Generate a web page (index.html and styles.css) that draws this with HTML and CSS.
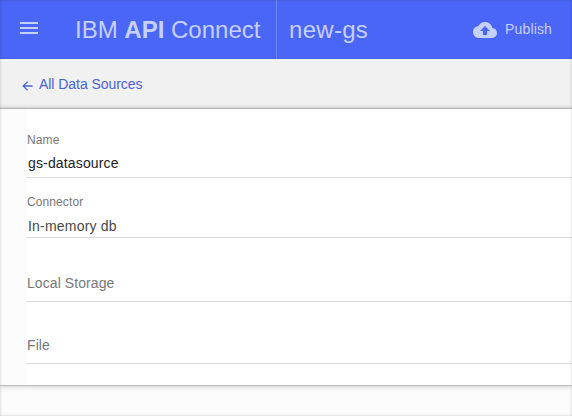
FILE: index.html
```html
<!DOCTYPE html>
<html lang="en">
<head>
<meta charset="utf-8">
<title>IBM API Connect</title>
<link rel="stylesheet" href="styles.css">
</head>
<body>
<div class="app">
  <header class="header">
    <svg class="menu" width="18" height="12" viewBox="0 0 18 12"><path d="M0 0h18v2H0zM0 5h18v2H0zM0 10h18v2H0z"/></svg>
    <div class="brand">IBM <b>API</b> Connect</div>
    <div class="project">new-gs</div>
    <div class="publish">
      <svg class="cloud" width="24" height="16" viewBox="0 4 24 16"><path d="M19.35 10.04C18.67 6.59 15.64 4 12 4 9.11 4 6.6 5.64 5.35 8.04 2.34 8.36 0 10.91 0 14c0 3.31 2.69 6 6 6h13c2.76 0 5-2.24 5-5 0-2.64-2.05-4.78-4.65-4.96zM14 13v4h-4v-4H7l5-5 5 5h-3z"/></svg>
      <span>Publish</span>
    </div>
  </header>
  <nav class="crumbs">
    <svg class="arrow" width="11" height="10" viewBox="0 0 11 10"><path d="M10.5 5H1.2M5.6.6L1.2 5l4.4 4.4"/></svg>
    <a class="back">All Data Sources</a>
  </nav>
  <main class="panel">
    <section class="field name"><div class="label">Name</div><div class="value">gs-datasource</div></section>
    <section class="field connector"><div class="label">Connector</div><div class="value">In-memory db</div></section>
    <section class="field empty storage">Local Storage</section>
    <section class="field empty file">File</section>
  </main>
</div>
</body>
</html>
```

FILE: styles.css
```css
* { box-sizing: border-box; }
body { margin: 0; font-family: "Liberation Sans", Arial, sans-serif; }
.app { position: relative; height: 416px; overflow: hidden; background: #fcfcfc; }
.app::after {
  content: ""; position: absolute; inset: 0; pointer-events: none;
  box-shadow: inset 0 0 3px rgba(0,0,0,.22);
}
.header {
  display: flex; height: 59px; padding-left: 20px;
  background: #4a66f7; border-bottom: 1px solid #4660dc; color: #c6d0fd;
}
.menu { margin-top: 22px; fill: #c6d0fd; }
.brand, .project { font-size: 24px; line-height: 60px; white-space: pre; }
.brand { width: 239px; padding-left: 37px; border-right: 1px solid #6f86f9; height: 59px; }
.project { padding-left: 12px; letter-spacing: .3px; }
.publish { display: flex; margin-left: auto; padding-right: 20px; font-size: 14px; line-height: 59px; letter-spacing: .15px; }
.cloud { margin: 22px 8px 0 0; fill: #c6d0fd; }
.crumbs {
  display: flex; height: 50px; padding-left: 22px;
  background: linear-gradient(#f1f1f1 45px, #e8e8e8 47px, #d8d8d8 49px, #bcbcbc 49px);
  color: #4a62d8; font-size: 14px; line-height: 51px;
}
.back { letter-spacing: -.05px; }
.arrow { margin: 22px 6px 0 0; fill: none; stroke: #4a62d8; stroke-width: 1.3; }
.panel {
  height: 276px; padding-left: 26px; background: linear-gradient(90deg, #fcfcfc 26px, #fff 26px);
  box-shadow: 0 1px 1px rgba(0,0,0,.14), 0 2px 5px rgba(0,0,0,.16);
}
.field { border-bottom: 1px solid #dcdcdc; }
.label { padding-left: 1px; color: #777; font-size: 12px; line-height: 14px; letter-spacing: .1px; }
.value { padding-left: 2px; color: #484848; font-size: 14px; line-height: 18px; letter-spacing: .15px; }
.name { height: 69px; padding-top: 24px; }
.name .value { margin-top: 7px; color: #222; }
.connector { height: 60px; padding-top: 17px; }
.connector .value { margin-top: 8px; letter-spacing: .2px; }
.empty { padding-left: 1px; color: #777; font-size: 14px; line-height: 18px; letter-spacing: .08px; }
.storage { height: 64px; padding-top: 36px; }
.file { height: 62px; padding-top: 34px; }
```
